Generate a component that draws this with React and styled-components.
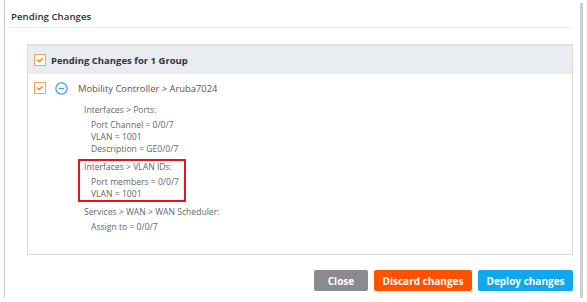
import React from "react";
import styled, { createGlobalStyle } from "styled-components";

const Global = createGlobalStyle`
  html, body { margin: 0; padding: 0; background: #fff; }
  body { font-family: "Open Sans", "Liberation Sans", sans-serif; }
`;

const Page = styled.div`
  width: 587px;
  height: 302px;
  display: flex;
  padding-left: 4px;
  box-sizing: border-box;
  overflow: hidden;
`;

const Frame = styled.div`
  flex: 1;
  height: 298px;
  border-left: 1px solid #c9c9c9;
  padding: 0 7px 0 5px;
  display: flex;
  flex-direction: column;
`;

const Scrollbar = styled.div`
  width: 3px;
  height: 295px;
  margin: 3px 4px 0 0;
  background: #cfcfcf;
`;

const TitleBar = styled.div`
  height: 28px;
  box-sizing: border-box;
  padding: 6px 0 0 1px;
  border-bottom: 1px solid #ececec;
  display: flex;
  align-items: center;
  font-size: 9.7px;
  font-weight: 600;
  color: #333;
`;

const Panel = styled.div`
  margin: 16px 0 0 17px;
  border: 1px solid #dcdcdc;
  border-top: 2px solid #e0e0e0;
  padding-bottom: 19px;
`;

const PanelHeader = styled.div`
  height: 28px;
  background: #e9ecf1;
  display: flex;
  align-items: center;
  padding-left: 6px;
  gap: 5px;
  font-size: 9.5px;
  font-weight: 700;
  color: #333;
`;

const Box = styled.span`
  width: 12px;
  height: 12px;
  box-sizing: border-box;
  border: 1px solid #f5a45a;
  background: #fff;
  display: inline-flex;
  align-items: center;
  justify-content: center;
  flex: none;
`;

const Check = () => (
  <Box>
    <svg width="8" height="6" viewBox="0 0 8 6">
      <path d="M1 2.6 L3.2 4.6 L7 1" fill="none" stroke="#f7941d" strokeWidth="1.6" />
    </svg>
  </Box>
);

const Row = styled.div`
  margin-top: 7px;
  height: 14px;
  display: flex;
  align-items: center;
  padding-left: 6px;
  font-size: 9.4px;
  color: #555;
`;

const IconWrap = styled.span`
  margin-left: 9px;
  margin-right: 10px;
  display: inline-flex;
`;

const MinusCircle = () => (
  <IconWrap>
    <svg width="13" height="13" viewBox="0 0 13 13">
      <circle cx="6.5" cy="6.5" r="5.6" fill="none" stroke="#3b9ff0" strokeWidth="1.3" />
      <line x1="3.8" y1="6.5" x2="9.2" y2="6.5" stroke="#3b9ff0" strokeWidth="1.3" />
    </svg>
  </IconWrap>
);

const Details = styled.div`
  margin: 7px 0 0 50px;
  display: flex;
  flex-direction: column;
  gap: 2px;
`;

const Group = styled.div`
  width: fit-content;
  border: 2px solid ${(p) => (p.$highlight ? "#e3141d" : "transparent")};
  padding: 0 5px 0 4px;
  font-size: 8.6px;
  line-height: 12px;
  color: #666;
`;

const Heading = styled.div`
  margin-bottom: 3px;
`;

const Item = styled.div`
  padding-left: 7px;
`;

const Footer = styled.div`
  margin-top: 15px;
  display: flex;
  justify-content: flex-end;
  gap: 6px;
`;

const Button = styled.button`
  width: ${(p) => p.$w}px;
  height: 21px;
  border: none;
  border-radius: 2px;
  background: ${(p) => p.$bg};
  color: #fff;
  font-family: "Open Sans", "Liberation Sans", sans-serif;
  font-weight: 700;
  font-size: 10px;
  padding: 0;
  display: flex;
  align-items: center;
  justify-content: center;
`;

const groups = [
  { title: "Interfaces > Ports:", items: ["Port Channel = 0/0/7", "VLAN = 1001", "Description = GE0/0/7"] },
  { title: "Interfaces > VLAN IDs:", items: ["Port members = 0/0/7", "VLAN = 1001"], highlight: true },
  { title: "Services > WAN > WAN Scheduler:", items: ["Assign to = 0/0/7"] },
];

export default function App() {
  return (
    <>
      <Global />
      <Page>
        <Frame>
          <TitleBar>Pending Changes</TitleBar>
          <Panel>
            <PanelHeader>
              <Check />
              Pending Changes for 1 Group
            </PanelHeader>
            <Row>
              <Check />
              <MinusCircle />
              Mobility Controller &gt; Aruba7024
            </Row>
            <Details>
              {groups.map((g) => (
                <Group key={g.title} $highlight={g.highlight}>
                  <Heading>{g.title}</Heading>
                  {g.items.map((it) => (
                    <Item key={it}>{it}</Item>
                  ))}
                </Group>
              ))}
            </Details>
          </Panel>
          <Footer>
            <Button $w={54} $bg="#8b8b8f">Close</Button>
            <Button $w={98} $bg="#ff5200">Discard changes</Button>
            <Button $w={95} $bg="#10a7ec">Deploy changes</Button>
          </Footer>
        </Frame>
        <Scrollbar />
      </Page>
    </>
  );
}
